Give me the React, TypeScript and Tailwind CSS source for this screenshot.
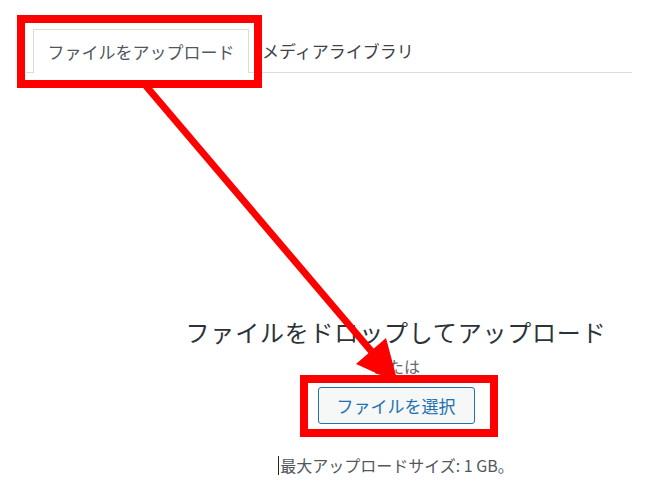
import React from "react";

const App = () => {
  return (
    <div
      className="relative w-[652px] h-[497px] overflow-hidden bg-white"
      style={{ fontFamily: '"Noto Sans CJK JP", "Noto Sans", sans-serif' }}
    >
      {/* Tabs */}
      <div className="ml-[26px] w-[606px] pt-[29px] flex items-end border-b border-[#dcdcde]">
        <div className="ml-[7px] w-[216px] h-[44px] -mb-px flex items-center justify-center border border-b-0 border-[#dcdcde] bg-white text-[17px] text-[#50575e]">
          ファイルをアップロード
        </div>
        <div className="h-[43px] pl-[13px] flex items-center text-[17px] text-[#3c434a]">
          メディアライブラリ
        </div>
      </div>

      {/* Drop area */}
      <div className="ml-[140px] w-[512px] flex flex-col items-center">
        <h2 className="mt-[242px] text-[24px] leading-[34px] tracking-[0.8px] text-[#2c3338]">
          ファイルをドロップしてアップロード
        </h2>
        <p className="mt-[5px] text-[16px] leading-[24px] text-[#646970]">または</p>
        <button className="mt-[9px] w-[157px] h-[37px] rounded-[3px] border border-[#2271b1] bg-[#f6f7f7] text-[17px] text-[#2271b1]">
          ファイルを選択
        </button>
        <p className="mt-[30px] flex items-center text-[16px] leading-[22px] text-[#50575e]">
          <span className="mr-[1px] inline-block h-[19px] border-l border-[#1d2327]" />
          最大アップロードサイズ: 1 GB。
        </p>
      </div>

      {/* Annotations */}
      <div className="absolute left-[17px] top-[15px] w-[245px] h-[73px] border-[8px] border-[#ff0000]" />
      <div className="absolute left-[300px] top-[375px] w-[198px] h-[62px] border-[8px] border-[#ff0000]" />
      <svg className="absolute left-0 top-0" width="652" height="497" viewBox="0 0 652 497">
        <line x1="146" y1="86" x2="372" y2="352" stroke="#ff0000" strokeWidth="7" />
        <polygon points="398,383 356,364 386,338" fill="#ff0000" />
      </svg>
    </div>
  );
};

export default App;
